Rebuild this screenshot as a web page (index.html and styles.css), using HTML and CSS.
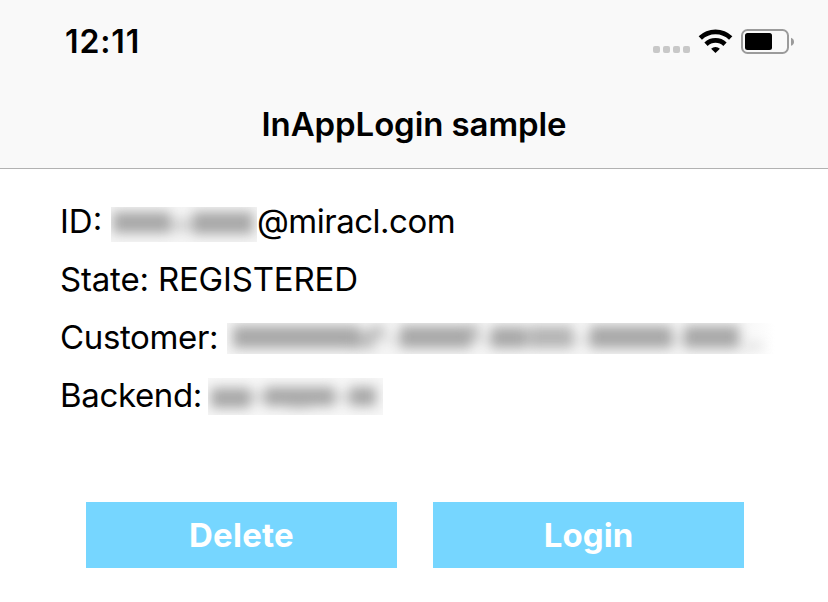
FILE: index.html
```html
<!DOCTYPE html>
<html lang="en">
<head>
<meta charset="utf-8">
<title>InAppLogin sample</title>
<link rel="stylesheet" href="styles.css">
</head>
<body>
<header class="header">
  <div class="status">
    <span class="time">12:11</span>
    <svg class="status-icons" width="144" height="30" viewBox="0 0 144 30" aria-hidden="true">
      <g fill="#c8c8c8">
        <rect x="3" y="19" width="7" height="7" rx="2"/>
        <rect x="13" y="19" width="7" height="7" rx="2"/>
        <rect x="23" y="19" width="7" height="7" rx="2"/>
        <rect x="33" y="19" width="7" height="7" rx="2"/>
      </g>
      <g fill="none" stroke="#000" stroke-width="4.7">
        <path d="M50.3 11a21.8 21.8 0 0 1 30.4 0"/>
        <path d="M56 17.200a13.700 13.700 0 0 1 19 0"/>
      </g>
      <path d="M65.500 26L61.100 21.700a6.400 6.400 0 0 1 8.800 0z"/>
      <rect x="92" y="3" width="46" height="23" rx="5.500" fill="none" stroke="#9b9b9b" stroke-width="2"/>
      <rect x="95" y="6" width="27" height="17" rx="2.500"/>
      <path d="M141 10.700q3 1 3 4t-3 4z" fill="#9b9b9b"/>
    </svg>
  </div>
  <h1 class="title">InAppLogin sample</h1>
</header>
<main class="content">
  <div class="row"><span class="label id-label">ID:</span><svg class="mask mask-id" width="146" height="35" viewBox="0 0 146 35" aria-hidden="true">
    <rect width="146" height="35" fill="#f5f5f5"/>
    <g class="soft"><rect x="2" y="5" width="57" height="21"/><rect x="57" y="11" width="27" height="14" opacity=".4"/><rect x="82" y="5" width="60" height="22"/></g>
  </svg><span class="domain">@miracl.com</span></div>
  <div class="row"><span class="state">State: REGISTERED</span></div>
  <div class="row"><span class="label customer-label">Customer:</span><svg class="mask mask-customer" width="548" height="31" viewBox="0 0 548 31" aria-hidden="true">
    <defs><linearGradient id="fade"><stop offset=".93" stop-color="#f5f5f5"/><stop offset="1" stop-color="#fff"/></linearGradient></defs>
    <rect width="548" height="31" fill="url(#fade)"/>
    <g class="soft"><rect x="6" y="3" width="126" height="22"/><rect x="122" y="7" width="26" height="19" opacity=".7"/><rect x="144" y="2" width="14" height="14" opacity=".6"/><rect x="173" y="3" width="71" height="22"/><rect x="240" y="1" width="13" height="16" opacity=".6"/><rect x="264" y="4" width="36" height="21"/><rect x="302" y="3" width="44" height="22" opacity=".8"/><rect x="363" y="3" width="82" height="22"/><rect x="457" y="3" width="55" height="22"/><rect x="158" y="14" width="307" height="6" opacity=".3"/><rect x="516" y="20" width="20" height="6" opacity=".35"/></g>
  </svg></div>
  <div class="row"><span class="label backend-label">Backend:</span><svg class="mask mask-backend" width="175" height="37" viewBox="0 0 175 37" aria-hidden="true">
    <rect width="175" height="37" fill="#f7f7f7"/>
    <g class="soft"><rect x="3" y="10" width="39" height="20"/><rect x="40" y="13" width="20" height="12" opacity=".35"/><rect x="57" y="9" width="69" height="19"/><rect x="80" y="14" width="22" height="17" opacity=".5"/><rect x="124" y="13" width="20" height="12" opacity=".3"/><rect x="142" y="9" width="26" height="19"/></g>
  </svg></div>
  <div class="actions">
    <button class="button"><span class="delete">Delete</span></button>
    <button class="button"><span class="login">Login</span></button>
  </div>
</main>
</body>
</html>
```
FILE: styles.css
```css
* { box-sizing: border-box; }
body {
  margin: 0;
  background: #fff;
  color: #000;
  font-family: Inter, "Liberation Sans", sans-serif;
  font-size: 33px;
}
.header {
  height: 169px;
  background: #f9f9f9;
  border-bottom: 1px solid #b2b2b2;
}
.status {
  display: flex;
  justify-content: space-between;
  align-items: center;
  height: 84px;
  padding: 0 34px 0 65px;
}
.time { font-size: 32px; font-weight: 600; line-height: 40px; letter-spacing: 0.9px; }
.status-icons { display: block; }
.title {
  margin: 0;
  font-size: 33px;
  font-weight: 600;
  line-height: 80px;
  text-align: center;
  letter-spacing: -0.1px;
}
.content { padding-top: 23px; }
.row {
  display: flex;
  align-items: flex-start;
  height: 58px;
  padding-left: 60px;
  line-height: 58px;
  white-space: nowrap;
}
.label { flex: none; }
.id-label { width: 51px; }
.customer-label { width: 167px; letter-spacing: -0.35px; }
.backend-label { width: 148px; letter-spacing: -0.35px; }
.domain { letter-spacing: -0.5px; }
.state { letter-spacing: -0.18px; }
.mask { flex: none; display: block; }
.mask-id { margin-top: 15px; }
.mask-customer { margin-top: 15px; }
.mask-backend { margin-top: 12px; }
.soft { fill: #a8a8a8; filter: blur(6px); }
.actions {
  display: flex;
  gap: 36px;
  padding: 78px 84px 0 86px;
}
.button {
  flex: 1;
  height: 66px;
  padding: 0;
  border: 0;
  background: #76d6ff;
  color: #fff;
  font: 700 33px/66px Inter, "Liberation Sans", sans-serif;
}
.delete { letter-spacing: 0.25px; }
.login { letter-spacing: 0.1px; }
```
